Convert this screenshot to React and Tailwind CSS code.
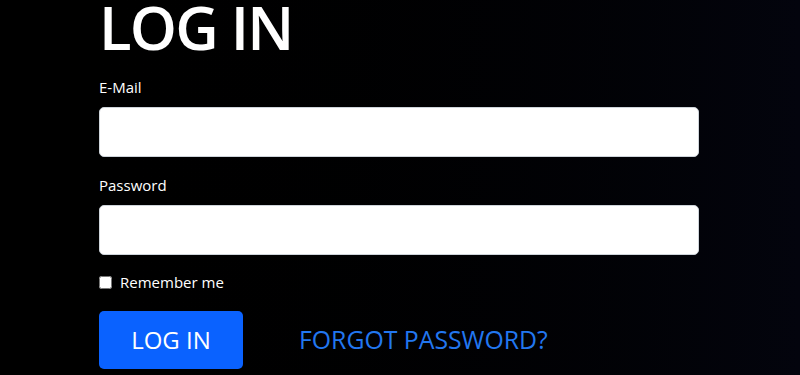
export default function App() {
  return (
    <div
      className="h-[375px] w-[800px] overflow-hidden bg-gradient-to-r from-black to-[#03040d] text-white"
      style={{ fontFamily: '"Open Sans", "Noto Sans", sans-serif' }}
    >
      <div className="ml-[99px] w-[600px]">
        <h1 className="pt-[2px] text-[60px] font-semibold leading-[50px] tracking-[-1.8px]">LOG IN</h1>

        <form className="mt-[23px]" onSubmit={(e) => e.preventDefault()}>
          <div className="mb-[16px]">
            <label className="mb-[8px] block text-[15px] leading-[24px]">E-Mail</label>
            <input
              type="email"
              className="block h-[50px] w-full rounded-[5px] border border-[#ced4da] bg-white px-4 text-black outline-none"
            />
          </div>
          <div className="mb-[15px]">
            <label className="mb-[8px] block text-[15px] leading-[24px]">Password</label>
            <input
              type="password"
              className="block h-[50px] w-full rounded-[5px] border border-[#ced4da] bg-white px-4 text-black outline-none"
            />
          </div>
          <div className="flex h-[24px] items-center gap-[8px]">
            <input type="checkbox" className="h-[13px] w-[13px] accent-white" />
            <span className="text-[15px] leading-[24px]">Remember me</span>
          </div>
          <div className="mt-[17px] flex items-center gap-[56px]">
            <button
              type="submit"
              className="h-[58px] w-[144px] rounded-[5px] bg-[#0a62ff] text-[24px] text-white"
            >
              LOG IN
            </button>
            <a href="#" className="text-[24.8px] text-[#2277f0]">
              FORGOT PASSWORD?
            </a>
          </div>
        </form>
      </div>
    </div>
  )
}
